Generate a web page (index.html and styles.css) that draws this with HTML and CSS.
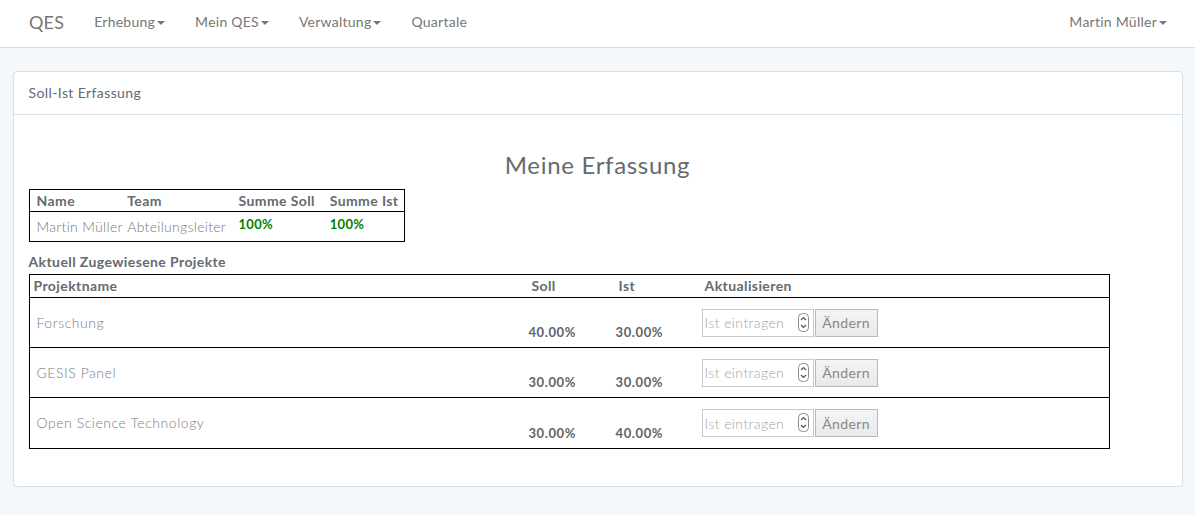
FILE: index.html
```html
<!DOCTYPE html>
<html lang="de">
<head>
<meta charset="utf-8">
<title>QES</title>
<link rel="stylesheet" href="styles.css">
</head>
<body>
<nav class="navbar">
  <div class="nav-left">
    <a class="brand" href="#">QES</a>
    <a class="nav-link" href="#">Erhebung<span class="caret"></span></a>
    <a class="nav-link" href="#">Mein QES<span class="caret"></span></a>
    <a class="nav-link" href="#">Verwaltung<span class="caret"></span></a>
    <a class="nav-link" href="#">Quartale</a>
  </div>
  <div class="nav-right">
    <a class="nav-link" href="#">Martin Müller<span class="caret"></span></a>
  </div>
</nav>

<main class="container">
  <section class="panel">
    <div class="panel-heading">Soll-Ist Erfassung</div>
    <div class="panel-body">
      <h3 class="title">Meine Erfassung</h3>

      <table class="summary">
        <thead>
          <tr>
            <th class="c-name">Name</th>
            <th class="c-team">Team</th>
            <th class="c-soll">Summe Soll</th>
            <th class="c-ist">Summe Ist</th>
          </tr>
        </thead>
        <tbody>
          <tr>
            <td>Martin Müller</td>
            <td>Abteilungsleiter</td>
            <td class="pct"><b>100%</b></td>
            <td class="pct"><b>100%</b></td>
          </tr>
        </tbody>
      </table>

      <div class="section-label">Aktuell Zugewiesene Projekte</div>

      <table class="projects">
        <thead>
          <tr>
            <th class="p-name">Projektname</th>
            <th class="p-soll">Soll</th>
            <th class="p-ist">Ist</th>
            <th class="p-act">Aktualisieren</th>
          </tr>
        </thead>
        <tbody>
          <tr>
            <td class="name">Forschung</td>
            <td class="val">40.00%</td>
            <td class="val">30.00%</td>
            <td class="act">
              <form class="upd">
                <span class="field"><input type="text" placeholder="Ist eintragen"><svg class="spin" width="11" height="19" viewBox="0 0 11 19"><rect x="0.5" y="0.5" width="10" height="18" rx="4" fill="#fff" stroke="#8c8c8c"/><path d="M3 7 L5.5 4.5 L8 7" fill="none" stroke="#555" stroke-width="1.2"/><path d="M3 12 L5.5 14.5 L8 12" fill="none" stroke="#555" stroke-width="1.2"/></svg></span><button type="button">Ändern</button>
              </form>
            </td>
          </tr>
          <tr>
            <td class="name">GESIS Panel</td>
            <td class="val">30.00%</td>
            <td class="val">30.00%</td>
            <td class="act">
              <form class="upd">
                <span class="field"><input type="text" placeholder="Ist eintragen"><svg class="spin" width="11" height="19" viewBox="0 0 11 19"><rect x="0.5" y="0.5" width="10" height="18" rx="4" fill="#fff" stroke="#8c8c8c"/><path d="M3 7 L5.5 4.5 L8 7" fill="none" stroke="#555" stroke-width="1.2"/><path d="M3 12 L5.5 14.5 L8 12" fill="none" stroke="#555" stroke-width="1.2"/></svg></span><button type="button">Ändern</button>
              </form>
            </td>
          </tr>
          <tr class="last">
            <td class="name">Open Science Technology</td>
            <td class="val">30.00%</td>
            <td class="val">40.00%</td>
            <td class="act">
              <form class="upd">
                <span class="field"><input type="text" placeholder="Ist eintragen"><svg class="spin" width="11" height="19" viewBox="0 0 11 19"><rect x="0.5" y="0.5" width="10" height="18" rx="4" fill="#fff" stroke="#8c8c8c"/><path d="M3 7 L5.5 4.5 L8 7" fill="none" stroke="#555" stroke-width="1.2"/><path d="M3 12 L5.5 14.5 L8 12" fill="none" stroke="#555" stroke-width="1.2"/></svg></span><button type="button">Ändern</button>
              </form>
            </td>
          </tr>
        </tbody>
      </table>
    </div>
  </section>
</main>
</body>
</html>
```

FILE: styles.css
```css
* { box-sizing: border-box; }

html, body {
  margin: 0;
  padding: 0;
}

body {
  background: #f5f8fa;
  font-family: "Lato", "Open Sans", sans-serif;
  font-size: 14px;
  line-height: 22px;
  letter-spacing: 0.4px;
  color: #636b6f;
}

a { text-decoration: none; }

/* ---------- navbar ---------- */
.navbar {
  height: 48px;
  background: #fff;
  border-bottom: 1px solid #d3e0e9;
  display: flex;
  justify-content: space-between;
  align-items: center;
  padding: 0 13px 3px 14px;
}

.nav-left, .nav-right {
  display: flex;
  align-items: center;
}

.brand {
  font-size: 18px;
  color: #777;
  padding: 0 15px;
  line-height: 44px;
  letter-spacing: 0.2px;
}

.nav-link {
  color: #777;
  padding: 0 15px;
  line-height: 44px;
  font-size: 14px;
  letter-spacing: 0.25px;
}

.caret {
  display: inline-block;
  width: 0;
  height: 0;
  margin-left: 2px;
  vertical-align: middle;
  border-top: 4px solid #777;
  border-left: 4px solid transparent;
  border-right: 4px solid transparent;
}

/* ---------- layout ---------- */
.container {
  width: 1170px;
  margin: 23px auto 0;
}

.panel {
  background: #fff;
  border: 1px solid #d3e0e9;
  border-radius: 4px;
  box-shadow: 0 1px 1px rgba(0, 0, 0, 0.05);
}

.panel-heading {
  padding: 10px 15px;
  border-bottom: 1px solid #d3e0e9;
  line-height: 22px;
  color: #636b6f;
}

.panel-body {
  padding: 15px;
}

.title {
  margin: 22px 0 11px;
  font-size: 24px;
  line-height: 26px;
  font-weight: 400;
  letter-spacing: 0.7px;
  text-align: center;
  color: #636b6f;
}

/* ---------- summary table ---------- */
table {
  border-collapse: collapse;
  border: 1px solid #000;
}

th {
  text-align: left;
  font-weight: 700;
  color: #636b6f;
}

.summary {
  table-layout: fixed;
  width: 376px;
}

.summary th {
  height: 22px;
  line-height: 20px;
  padding: 1px 0 0 7px;
  border-bottom: 1px solid #000;
  vertical-align: middle;
}

.summary .c-name { width: 91px; }
.summary .c-team { width: 111px; }
.summary .c-soll { width: 91px; }
.summary .c-ist  { width: 81px; }

.summary td {
  height: 30px;
  padding: 0 0 0 7px;
  color: #74797c;
  font-weight: 300;
  letter-spacing: 0.3px;
  white-space: nowrap;
  vertical-align: middle;
}

.summary td.pct {
  vertical-align: top;
  padding-top: 2px;
  line-height: 20px;
}

.pct b {
  color: #008000;
  font-size: 13px;
  font-weight: 700;
}

.section-label {
  margin-top: 9px;
  padding-bottom: 1px;
  line-height: 22px;
  font-weight: 700;
  color: #636b6f;
}

/* ---------- projects table ---------- */
.projects {
  table-layout: fixed;
  width: 1081px;
  margin-bottom: 22px;
}

.projects th {
  height: 23px;
  line-height: 22px;
  padding: 0 0 0 7px;
  border-bottom: 1px solid #000;
  vertical-align: middle;
}

.projects .p-name { width: 495px; padding-left: 4px; }
.projects .p-soll { width: 87px; }
.projects .p-ist  { width: 86px; }
.projects .p-act  { width: 411px; }

.projects td {
  height: 50px;
  border-bottom: 1px solid #000;
  padding: 0 0 0 4px;
  vertical-align: middle;
}

.projects tr.last td {
  height: 51px;
}

.projects td.name {
  padding-left: 7px;
  color: #797e81;
  font-weight: 300;
  letter-spacing: 0.55px;
}

.projects td.val {
  vertical-align: bottom;
  padding-bottom: 4px;
  font-size: 13px;
  font-weight: 700;
  letter-spacing: 0.6px;
  color: #5f6467;
}

.upd {
  display: flex;
  align-items: center;
  margin: 0;
}

.field {
  position: relative;
  display: block;
}

.field input {
  display: block;
  width: 112px;
  height: 28px;
  margin: 0;
  padding: 0 16px 0 2px;
  border: 1px solid #c9c9c9;
  font-family: inherit;
  font-size: 14px;
  font-weight: 300;
  letter-spacing: 0.4px;
  color: #555;
  background: #fff;
  outline: none;
}

.field input::placeholder {
  color: #a4a4a4;
}

.spin {
  position: absolute;
  right: 5px;
  top: 4px;
}

.upd button {
  height: 28px;
  width: 63px;
  margin: 0 0 0 1px;
  padding: 0;
  border: 1px solid #b9b9b9;
  background: linear-gradient(#f4f4f4, #e9e9e9);
  font-family: inherit;
  font-size: 14px;
  font-weight: 400;
  letter-spacing: 0.4px;
  color: #888;
}
```
